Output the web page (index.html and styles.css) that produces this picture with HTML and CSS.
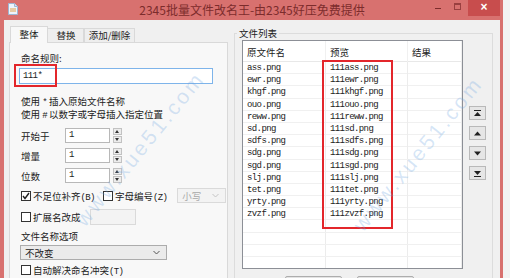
FILE: index.html
```html
<!DOCTYPE html>
<html lang="zh-CN">
<head>
    <meta charset="UTF-8">
    <meta name="viewport" content="width=device-width, initial-scale=1.0">
    <title>2345批量文件改名王</title>
    <link rel="stylesheet" href="styles.css">
</head>
<body>
    <div class="window">
        <div class="titlebar">
            <div class="tb-left">
                <svg class="app-icon" width="10" height="12" viewBox="0 0 10 12">
                    <path d="M0.5 0.5 H6.5 L9.5 3.5 V11.5 H0.5 Z" fill="#eef4fb" stroke="#9fb6d2"/>
                    <path d="M6.5 0.5 V3.5 H9.5" fill="#d6e3f2" stroke="#9fb6d2"/>
                    <path d="M2 6 H8 M2 8 H8" stroke="#e3a24a" stroke-width="1"/>
                </svg>
            </div>
            <div class="title">2345批量文件改名王-由2345好压免费提供</div>
            <div class="controls">
                <span class="ctl-min"></span>
                <span class="ctl-max"></span>
                <span class="ctl-close">×</span>
            </div>
        </div>

        <div class="client">
            <!-- 左侧：命名规则 -->
            <div class="left">
                <div class="tabs">
                    <div class="tab active">整体</div>
                    <div class="tab w-replace">替换</div>
                    <div class="tab w-add">添加/删除</div>
                </div>
                <div class="panel">
                    <div class="line">命名规则:</div>
                    <div class="rule-row">
                        <div class="rule-input mono">111*</div>
                        <div class="mark"></div>
                    </div>
                    <div class="line hint1">使用 <span class="mono">*</span> 插入原始文件名称</div>
                    <div class="line hint2">使用 <span class="mono">#</span> 以数字或字母插入指定位置</div>

                    <div class="spin-row first">
                        <span class="spin-label">开始于</span>
                        <span class="spin-input mono">1</span>
                        <span class="spin-btns"><i class="up"></i><i class="down"></i></span>
                    </div>
                    <div class="spin-row">
                        <span class="spin-label">增量</span>
                        <span class="spin-input mono">1</span>
                        <span class="spin-btns"><i class="up"></i><i class="down"></i></span>
                    </div>
                    <div class="spin-row">
                        <span class="spin-label">位数</span>
                        <span class="spin-input mono">1</span>
                        <span class="spin-btns"><i class="up"></i><i class="down"></i></span>
                    </div>

                    <div class="check-row pad-row">
                        <span class="box">
                            <svg width="8" height="8" viewBox="0 0 8 8"><polyline points="1,4 3,6.5 7,1" fill="none" stroke="#222" stroke-width="1.4"/></svg>
                        </span>
                        <span class="ctext">不足位补齐<span class="mono">(B)</span></span>
                        <span class="box letter-box"></span>
                        <span class="ctext">字母编号<span class="mono">(Z)</span></span>
                        <span class="combo disabled small">小写
                            <svg width="7" height="5" viewBox="0 0 7 5"><polyline points="0.5,1 3.5,4 6.5,1" fill="none" stroke="#c4c4c4" stroke-width="1"/></svg>
                        </span>
                    </div>

                    <div class="check-row ext-row">
                        <span class="box"></span>
                        <span class="ctext">扩展名改成</span>
                        <span class="ext-input"></span>
                    </div>

                    <div class="line opt-label">文件名称选项</div>
                    <div class="combo name-opt">不改变
                        <svg width="7" height="5" viewBox="0 0 7 5"><polyline points="0.5,1 3.5,4 6.5,1" fill="none" stroke="#555" stroke-width="1"/></svg>
                    </div>

                    <div class="check-row auto-row">
                        <span class="box"></span>
                        <span class="ctext">自动解决命名冲突<span class="mono">(T)</span></span>
                    </div>
                </div>
            </div>

            <!-- 右侧：文件列表 -->
            <div class="right">
                <div class="group">
                    <span class="legend">文件列表</span>
                    <div class="group-body">
                        <div class="list">
                            <div class="list-head">
                                <span>原文件名</span><span>预览</span><span>结果</span>
                            </div>
                            <div class="row"><span>ass.png</span><span>111ass.png</span><span></span></div>
                            <div class="row"><span>ewr.png</span><span>111ewr.png</span><span></span></div>
                            <div class="row"><span>khgf.png</span><span>111khgf.png</span><span></span></div>
                            <div class="row"><span>ouo.png</span><span>111ouo.png</span><span></span></div>
                            <div class="row"><span>reww.png</span><span>111reww.png</span><span></span></div>
                            <div class="row"><span>sd.png</span><span>111sd.png</span><span></span></div>
                            <div class="row"><span>sdfs.png</span><span>111sdfs.png</span><span></span></div>
                            <div class="row"><span>sdg.png</span><span>111sdg.png</span><span></span></div>
                            <div class="row"><span>sgd.png</span><span>111sgd.png</span><span></span></div>
                            <div class="row"><span>slj.png</span><span>111slj.png</span><span></span></div>
                            <div class="row"><span>tet.png</span><span>111tet.png</span><span></span></div>
                            <div class="row"><span>yrty.png</span><span>111yrty.png</span><span></span></div>
                            <div class="row"><span>zvzf.png</span><span>111zvzf.png</span><span></span></div>
                            <div class="row"><span></span><span></span><span></span></div>
                            <div class="row"><span></span><span></span><span></span></div>
                            <div class="row"><span></span><span></span><span></span></div>
                            <div class="row"><span></span><span></span><span></span></div>
                            <div class="preview-mark"></div>
                        </div>
                        <div class="side-btns">
                            <span class="sbtn">
                                <svg width="7" height="7" viewBox="0 0 7 7"><rect x="0" y="0" width="7" height="1" fill="#222"/><polygon points="3.5,2 7,6 0,6" fill="#222"/></svg>
                            </span>
                            <span class="sbtn">
                                <svg width="7" height="5" viewBox="0 0 7 5"><polygon points="3.5,0.5 7,4.5 0,4.5" fill="#222"/></svg>
                            </span>
                            <span class="sbtn">
                                <svg width="7" height="5" viewBox="0 0 7 5"><polygon points="0,0.5 7,0.5 3.5,4.5" fill="#222"/></svg>
                            </span>
                            <span class="sbtn">
                                <svg width="7" height="7" viewBox="0 0 7 7"><polygon points="0,1 7,1 3.5,5" fill="#222"/><rect x="0" y="6" width="7" height="1" fill="#222"/></svg>
                            </span>
                        </div>
                    </div>
                    <div class="bottom-btns">
                        <span class="btn"></span>
                        <span class="btn"></span>
                    </div>
                </div>
            </div>
        </div>

        <div class="watermark wm-left">www.xue51.com</div>
        <div class="watermark wm-right">www.xue51.com</div>
    </div>
</body>
</html>
```

FILE: styles.css
```css
body {
    margin: 0;
    padding: 0;
    width: 510px;
    height: 278px;
    overflow: hidden;
    background-color: #f3f3f3;
    font-family: "Noto Sans CJK SC", "Liberation Sans", sans-serif;
    font-size: 9.5px;
    color: #222;
}

.mono {
    font-family: "Liberation Mono", "Noto Sans CJK SC", monospace;
    font-size: 9px;
    letter-spacing: -0.6px;
}

.window {
    position: relative;
    width: 503px;
    height: 278px;
    box-sizing: border-box;
    border-left: 4px solid #d8716f;
    border-right: 3px solid #d8716f;
    background-color: #f0f0f0;
    display: flex;
    flex-direction: column;
    overflow: hidden;
}

/* 标题栏 */
.titlebar {
    height: 20px;
    flex: none;
    background-color: #d8716f;
    display: grid;
    grid-template-columns: 1fr auto 1fr;
    align-items: start;
}

.tb-left {
    padding: 3px 0 0 4px;
}

.app-icon {
    display: block;
}

.title {
    font-size: 12px;
    line-height: 19px;
    color: #7c2c2c;
}

.controls {
    justify-self: end;
    display: flex;
    align-items: flex-start;
}

.ctl-min {
    width: 6px;
    height: 1px;
    margin-top: 8px;
    background-color: #7c2c2c;
}

.ctl-max {
    width: 5px;
    height: 4px;
    margin: 3px 0 0 13px;
    border: 1px solid #9a4040;
    border-top-width: 2px;
}

.ctl-close {
    width: 32px;
    height: 16px;
    margin-left: 7px;
    background-color: #c84d4d;
    color: #fff;
    font-family: "Liberation Sans", sans-serif;
    font-size: 12px;
    font-weight: bold;
    line-height: 15px;
    text-align: center;
}

.client {
    flex: 1;
    display: flex;
    min-height: 0;
}

/* 左侧 */
.left {
    width: 230px;
    flex: none;
    padding: 6px 0 0 5px;
    box-sizing: border-box;
    display: flex;
    flex-direction: column;
}

.tabs {
    display: flex;
    align-items: flex-end;
    height: 16px;
    padding-left: 1px;
    position: relative;
    z-index: 1;
}

.tab {
    height: 14px;
    box-sizing: border-box;
    border: 1px solid #d9d9d9;
    border-bottom: none;
    background-color: #eeeeee;
    line-height: 13px;
    text-align: center;
}

.tab.active {
    width: 38px;
    height: 17px;
    margin-bottom: -1px;
    background-color: #f8f8f8;
    line-height: 15px;
}

.w-replace {
    width: 36px;
    border-left: none;
    padding-left: 1px;
}

.w-add {
    width: 51px;
    border-left: 1px solid #d9d9d9;
}

.panel {
    flex: 1;
    width: 219px;
    box-sizing: border-box;
    border: 1px solid #d9d9d9;
    border-bottom: none;
    background-color: #f8f8f8;
    padding: 9px 0 0 11px;
    display: flex;
    flex-direction: column;
}

.line {
    height: 12px;
    line-height: 12px;
    white-space: nowrap;
}

.rule-row {
    position: relative;
    margin: 4px 0 0 -2px;
}

.rule-input {
    width: 194px;
    height: 16px;
    box-sizing: border-box;
    border: 1px solid #7eb4ea;
    background-color: #fff;
    padding-left: 3px;
    line-height: 14px;
}

.mark {
    position: absolute;
    left: -5px;
    top: -4px;
    width: 43px;
    height: 23px;
    box-sizing: border-box;
    border: 2px solid #e3262b;
}

.hint1 {
    margin-top: 11px;
}

.hint2 {
    margin-top: 1px;
}

.spin-row {
    display: flex;
    align-items: center;
    height: 15px;
    margin-top: 5px;
}

.spin-row.first {
    margin-top: 8px;
}

.spin-label {
    width: 44px;
}

.spin-input {
    width: 45px;
    height: 15px;
    box-sizing: border-box;
    border: 1px solid #b8b8b8;
    background-color: #fff;
    padding-left: 3px;
    line-height: 13px;
}

.spin-btns {
    margin-left: 3px;
    width: 9px;
    height: 15px;
    display: flex;
    flex-direction: column;
    gap: 1px;
}

.spin-btns i {
    flex: 1;
    border: 1px solid #c2c2c2;
    background-color: #ececec;
    position: relative;
}

.spin-btns i::after {
    content: "";
    position: absolute;
    left: 1px;
    top: 1px;
    border-left: 2.5px solid transparent;
    border-right: 2.5px solid transparent;
}

.spin-btns .up::after {
    border-bottom: 3px solid #333;
}

.spin-btns .down::after {
    border-top: 3px solid #333;
}

.check-row {
    display: flex;
    align-items: center;
    white-space: nowrap;
}

.box {
    width: 10px;
    height: 10px;
    box-sizing: border-box;
    border: 1px solid #333;
    background-color: #fff;
    display: flex;
    align-items: center;
    justify-content: center;
}

.ctext {
    margin-left: 2px;
}

.pad-row {
    height: 15px;
    margin-top: 5px;
}

.letter-box {
    margin-left: 8px;
}

.combo {
    height: 15px;
    box-sizing: border-box;
    border: 1px solid #acacac;
    background-color: #ebebeb;
    display: flex;
    align-items: center;
    justify-content: space-between;
    padding: 0 6px 0 4px;
}

.combo.disabled {
    border-color: #dadada;
    background-color: #f3f3f3;
    color: #a8a8a8;
}

.combo.small {
    width: 49px;
    margin-left: 10px;
}

.ext-row {
    height: 16px;
    margin-top: 6px;
}

.ext-input {
    width: 46px;
    height: 16px;
    margin-left: 9px;
    box-sizing: border-box;
    border: 1px solid #dadada;
    background-color: #f3f3f3;
}

.opt-label {
    margin-top: 5px;
}

.name-opt {
    width: 147px;
    margin: 3px 0 0 -1px;
}

.auto-row {
    height: 12px;
    margin-top: 4px;
}

/* 右侧 */
.right {
    flex: 1;
}

.group {
    position: relative;
    width: 259px;
    height: 260px;
    margin-top: 13px;
    box-sizing: border-box;
    border: 1px solid #dcdcdc;
    padding: 6px 0 0 7px;
}

.legend {
    position: absolute;
    left: 2px;
    top: -7px;
    padding: 0 2px;
    background-color: #f0f0f0;
    line-height: 13px;
}

.group-body {
    display: flex;
    gap: 6px;
}

.list {
    position: relative;
    width: 221px;
    height: 229px;
    box-sizing: border-box;
    border: 1px solid #8c8f96;
    background-color: #fff;
    overflow: hidden;
}

.list-head,
.row {
    display: grid;
    grid-template-columns: 83px 82px 1fr;
}

.list-head {
    height: 21px;
    box-sizing: border-box;
    border-bottom: 1px solid #e8e8e8;
    line-height: 22px;
}

.list-head span {
    padding-left: 4px;
    border-right: 1px solid #f0f0f0;
}

.row {
    height: 12.2px;
    box-sizing: border-box;
    border-bottom: 1px solid #f0f0f0;
    font-family: "Liberation Mono", monospace;
    font-size: 9px;
    letter-spacing: -0.6px;
    line-height: 12px;
}

.row span {
    padding-left: 4px;
    border-right: 1px solid #ececec;
    white-space: nowrap;
}

.preview-mark {
    position: absolute;
    left: 79px;
    top: 19px;
    width: 71px;
    height: 169px;
    box-sizing: border-box;
    border: 2px solid #e3262b;
}

.side-btns {
    margin-top: 66px;
    display: flex;
    flex-direction: column;
    gap: 6px;
}

.sbtn {
    width: 17px;
    height: 14px;
    box-sizing: border-box;
    border: 1px solid #b9b9b9;
    background-color: #e6e6e6;
    display: flex;
    align-items: center;
    justify-content: center;
}

.bottom-btns {
    display: flex;
    gap: 15px;
    margin: 7px 0 0 43px;
}

.btn {
    width: 57px;
    height: 20px;
    box-sizing: border-box;
    border: 1px solid #adadad;
    border-radius: 2px;
    background-color: #e3e3e3;
}

/* 水印 */
.watermark {
    position: absolute;
    font-family: "Liberation Sans", sans-serif;
    font-size: 21px;
    letter-spacing: 3px;
    color: rgba(110, 165, 225, 0.28);
    white-space: nowrap;
    transform: rotate(-51deg);
    pointer-events: none;
}

.wm-left {
    left: 40px;
    top: 137px;
}

.wm-right {
    left: 318px;
    top: 142px;
}
```
